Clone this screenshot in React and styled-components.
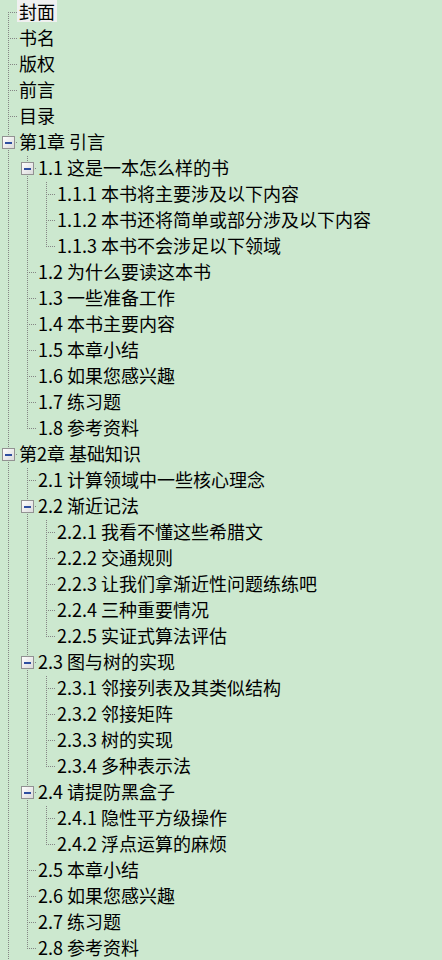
import React from 'react';
import styled, { createGlobalStyle } from 'styled-components';

const Global = createGlobalStyle`
  html, body { margin: 0; padding: 0; background: #cce8cf; }
  body { font-family: "Noto Sans CJK SC", "Noto Sans", sans-serif; }
`;

const Tree = styled.div`
  background: #cce8cf;
  min-height: 100vh;
  display: flex;
  flex-direction: column;
  overflow: hidden;
`;

const Row = styled.div`
  display: flex;
  align-items: flex-start;
  height: 26px;
  flex-shrink: 0;
`;

const Guide = styled.div`
  width: 19px;
  height: 26px;
  flex-shrink: 0;
  background-image: ${(p) =>
    p.$on ? 'linear-gradient(to bottom, #858585 1px, transparent 1px)' : 'none'};
  background-size: 1px 2px;
  background-repeat: repeat-y;
  background-position: 8px 0;
`;

const ConnectorSvg = styled.svg`
  display: block;
  width: 17px;
  height: 26px;
  flex-shrink: 0;
`;

const Label = styled.span`
  display: block;
  height: 22px;
  line-height: 22px;
  padding: 0 2px;
  font-size: 18px;
  color: #000;
  white-space: nowrap;
  background: ${(p) => (p.$selected ? '#f0f0f0' : 'transparent')};
`;

function Connector({ first, last, expander }) {
  const y1 = first ? 12 : 0;
  const y2 = last ? 13 : 26;
  return (
    <ConnectorSvg viewBox="0 0 17 26" shapeRendering="crispEdges">
      <defs>
        <linearGradient id="bx" x1="0" y1="0" x2="1" y2="1">
          <stop offset="0" stopColor="#ffffff" />
          <stop offset="1" stopColor="#d9d9d9" />
        </linearGradient>
      </defs>
      <line x1="8.5" y1={y1} x2="8.5" y2={y2} stroke="#858585" strokeWidth="1" strokeDasharray="1 1" />
      <line x1="10" y1="12.5" x2="17" y2="12.5" stroke="#858585" strokeWidth="1" strokeDasharray="1 1" />
      {expander && (
        <g>
          <rect x="2.5" y="6.5" width="12" height="12" fill="url(#bx)" stroke="#929292" strokeWidth="1" />
          <rect x="5" y="12" width="7" height="1.6" fill="#2e4fa0" />
        </g>
      )}
    </ConnectorSvg>
  );
}

const leaf = (t) => ({ t });

const data = [
  { t: '封面', sel: true },
  leaf('书名'),
  leaf('版权'),
  leaf('前言'),
  leaf('目录'),
  {
    t: '第1章 引言',
    c: [
      {
        t: '1.1 这是一本怎么样的书',
        c: [
          leaf('1.1.1 本书将主要涉及以下内容'),
          leaf('1.1.2 本书还将简单或部分涉及以下内容'),
          leaf('1.1.3 本书不会涉足以下领域'),
        ],
      },
      leaf('1.2 为什么要读这本书'),
      leaf('1.3 一些准备工作'),
      leaf('1.4 本书主要内容'),
      leaf('1.5 本章小结'),
      leaf('1.6 如果您感兴趣'),
      leaf('1.7 练习题'),
      leaf('1.8 参考资料'),
    ],
  },
  {
    t: '第2章 基础知识',
    c: [
      leaf('2.1 计算领域中一些核心理念'),
      {
        t: '2.2 渐近记法',
        c: [
          leaf('2.2.1 我看不懂这些希腊文'),
          leaf('2.2.2 交通规则'),
          leaf('2.2.3 让我们拿渐近性问题练练吧'),
          leaf('2.2.4 三种重要情况'),
          leaf('2.2.5 实证式算法评估'),
        ],
      },
      {
        t: '2.3 图与树的实现',
        c: [
          leaf('2.3.1 邻接列表及其类似结构'),
          leaf('2.3.2 邻接矩阵'),
          leaf('2.3.3 树的实现'),
          leaf('2.3.4 多种表示法'),
        ],
      },
      {
        t: '2.4 请提防黑盒子',
        c: [leaf('2.4.1 隐性平方级操作'), leaf('2.4.2 浮点运算的麻烦')],
      },
      leaf('2.5 本章小结'),
      leaf('2.6 如果您感兴趣'),
      leaf('2.7 练习题'),
      leaf('2.8 参考资料'),
    ],
  },
];

function flatten(nodes, guides, isRoot, continues, out) {
  nodes.forEach((n, i) => {
    const last = i === nodes.length - 1 && !continues;
    const first = isRoot && i === 0;
    out.push({ text: n.t, sel: n.sel, guides, first, last, expander: !!n.c });
    if (n.c) flatten(n.c, [...guides, !last], false, false, out);
  });
  return out;
}

const rows = flatten(data, [], true, true, []);

export default function App() {
  return (
    <>
      <Global />
      <Tree>
        {rows.map((r, idx) => (
          <Row key={idx}>
            {r.guides.map((g, gi) => (
              <Guide key={gi} $on={g} />
            ))}
            <Connector first={r.first} last={r.last} expander={r.expander} />
            <Label $selected={r.sel}>{r.text}</Label>
          </Row>
        ))}
      </Tree>
    </>
  );
}
